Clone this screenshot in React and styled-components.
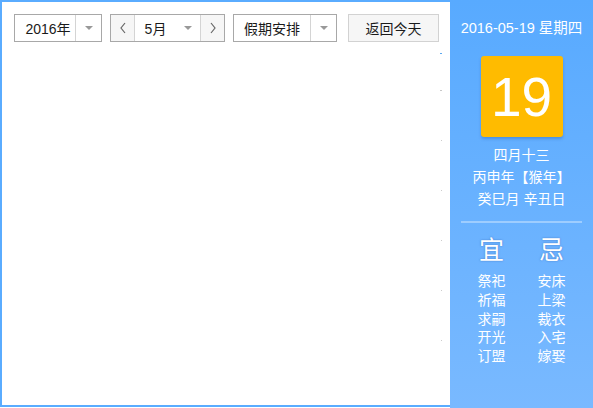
import React from "react";
import styled, { createGlobalStyle } from "styled-components";

const Global = createGlobalStyle`
  html, body { margin: 0; padding: 0; background: #fff; }
  body { font-family: "Liberation Sans", "Noto Sans CJK SC", sans-serif; }
`;

const Widget = styled.div`
  display: flex;
  width: 593px;
  height: 408px;
  align-items: flex-start;
`;

const Main = styled.div`
  box-sizing: border-box;
  width: 450px;
  height: 407px;
  border: 2px solid #5aacff;
  border-right: none;
  padding: 12px 0 0 12px;
  display: flex;
  flex-direction: column;
`;

const Toolbar = styled.div`
  display: flex;
  align-items: center;
  height: 28px;
`;

const Select = styled.div`
  box-sizing: border-box;
  display: flex;
  height: 28px;
  border: 1px solid #a8a8a8;
  margin-left: ${(p) => p.$gap || 0}px;
  background: #fff;
`;

const Label = styled.div`
  box-sizing: border-box;
  width: ${(p) => p.$w}px;
  padding-left: ${(p) => p.$pl || 0}px;
  display: flex;
  align-items: center;
  justify-content: center;
  font-size: 14px;
  color: #1a1a1a;
  border-right: ${(p) => (p.$div ? "1px solid #d4d4d4" : "none")};
`;

const Arrow = styled.div`
  width: ${(p) => p.$w || 24}px;
  display: flex;
  align-items: center;
  justify-content: center;
  &::after {
    content: "";
    border-left: 4px solid transparent;
    border-right: 4px solid transparent;
    border-top: 4px solid #999;
  }
`;

const Nav = styled.div`
  box-sizing: border-box;
  width: 24px;
  display: flex;
  align-items: center;
  justify-content: center;
  background: #f6f6f6;
  border-${(p) => (p.$side === "left" ? "right" : "left")}: 1px solid #d4d4d4;
`;

const TodayBtn = styled.div`
  box-sizing: border-box;
  width: 91px;
  height: 28px;
  margin-left: 11px;
  border: 1px solid #d2d2d2;
  background: #f6f6f6;
  display: flex;
  align-items: center;
  justify-content: center;
  font-size: 14px;
  color: #1a1a1a;
`;

const Body = styled.div`
  display: flex;
  flex-direction: column;
  align-items: flex-end;
  padding-right: 8px;
  padding-top: 11px;
`;

const Mark = styled.div`
  height: ${(p) => p.$h}px;
  display: flex;
  align-items: flex-start;
  &::before {
    content: "";
    width: ${(p) => p.$w}px;
    height: 1px;
    background: ${(p) => p.$c};
  }
`;

const Side = styled.div`
  width: 143px;
  height: 408px;
  background: linear-gradient(#58aaff, #79b9ff);
  display: flex;
  flex-direction: column;
  align-items: center;
  color: #fff;
  font-family: "Liberation Sans", "Noto Sans CJK SC", sans-serif;
`;

const DateLine = styled.div`
  margin-top: 19px;
  font-size: 14.5px;
  line-height: 18px;
  white-space: nowrap;
`;

const DayBox = styled.div`
  margin-top: 19px;
  width: 82px;
  height: 81px;
  background: #ffbb00;
  border-radius: 3px;
  box-shadow: 0 2px 3px rgba(0, 60, 140, 0.25);
  display: flex;
  align-items: center;
  justify-content: center;
  font-size: 55px;
  font-family: "Liberation Sans", sans-serif;
`;

const Lunar = styled.div`
  margin-top: 7px;
  display: flex;
  flex-direction: column;
  align-items: center;
  font-size: 14px;
  line-height: 22px;
  white-space: nowrap;
`;

const Divider = styled.div`
  width: 121px;
  height: 2px;
  background: rgba(255, 255, 255, 0.35);
  margin-top: 11px;
`;

const Columns = styled.div`
  margin-top: 11px;
  display: flex;
  gap: 32px;
`;

const Col = styled.div`
  display: flex;
  flex-direction: column;
  align-items: center;
`;

const Big = styled.div`
  font-size: 25px;
  line-height: 32px;
  margin-bottom: 6px;
  text-shadow: 0 0 2px rgba(40, 80, 160, 0.6);
`;

const Item = styled.div`
  font-size: 14px;
  line-height: 18.8px;
`;

const Chevron = ({ dir }) => (
  <svg width="8" height="12" viewBox="0 0 8 12">
    <polyline
      points={dir === "left" ? "6,1 2,6 6,11" : "2,1 6,6 2,11"}
      fill="none"
      stroke="#666"
      strokeWidth="1.2"
    />
  </svg>
);

const marks = [
  { h: 37, w: 2, c: "#5aa8f0" },
  { h: 50, w: 2, c: "#c8c8c8" },
  { h: 50, w: 1, c: "#ccc" },
  { h: 50, w: 1, c: "#ccc" },
  { h: 50, w: 1, c: "#ccc" },
  { h: 50, w: 1, c: "#ccc" },
  { h: 50, w: 1, c: "#ccc" },
];

const yi = ["祭祀", "祈福", "求嗣", "开光", "订盟"];
const ji = ["安床", "上梁", "裁衣", "入宅", "嫁娶"];

export default function App() {
  return (
    <>
      <Global />
      <Widget>
        <Main>
          <Toolbar>
            <Select>
              <Label $w={61} $pl={6} $div>2016年</Label>
              <Arrow $w={25} />
            </Select>
            <Select $gap={8}>
              <Nav $side="left"><Chevron dir="left" /></Nav>
              <Label $w={41}>5月</Label>
              <Arrow $w={24} />
              <Nav $side="right"><Chevron dir="right" /></Nav>
            </Select>
            <Select $gap={8}>
              <Label $w={77} $div>假期安排</Label>
              <Arrow $w={25} />
            </Select>
            <TodayBtn>返回今天</TodayBtn>
          </Toolbar>
          <Body>
            {marks.map((m, i) => (
              <Mark key={i} $h={m.h} $w={m.w} $c={m.c} />
            ))}
          </Body>
        </Main>
        <Side>
          <DateLine>2016-05-19 星期四</DateLine>
          <DayBox>19</DayBox>
          <Lunar>
            <span>四月十三</span>
            <span>丙申年【猴年】</span>
            <span>癸巳月 辛丑日</span>
          </Lunar>
          <Divider />
          <Columns>
            <Col>
              <Big>宜</Big>
              {yi.map((t) => <Item key={t}>{t}</Item>)}
            </Col>
            <Col>
              <Big>忌</Big>
              {ji.map((t) => <Item key={t}>{t}</Item>)}
            </Col>
          </Columns>
        </Side>
      </Widget>
    </>
  );
}
